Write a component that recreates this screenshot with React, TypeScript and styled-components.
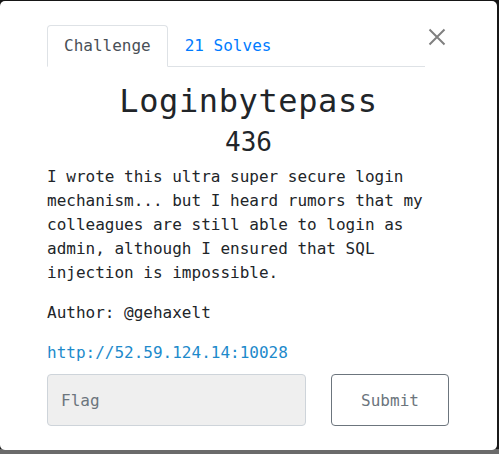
import React from "react";
import styled, { createGlobalStyle } from "styled-components";

const GlobalStyle = createGlobalStyle`
  html, body {
    margin: 0;
    padding: 0;
    background: #1b1b1b;
  }
  * {
    box-sizing: border-box;
  }
`;

const MONO = `"DejaVu Sans Mono", "Liberation Mono", monospace`;

const Backdrop = styled.div`
  width: 499px;
  height: 454px;
  overflow: hidden;
  padding-top: 1px;
  background: linear-gradient(to bottom, #161616 0, #1b1b1b 449px, #6b6b6b 449px, #6b6b6b 100%);
`;

const Modal = styled.div`
  width: 497px;
  height: 449px;
  background: #ffffff;
  border-radius: 5px;
  padding: 24px 47px 24px 47px;
  font-family: ${MONO};
  color: #212529;
  display: flex;
  flex-direction: column;
`;

const Header = styled.div`
  display: flex;
  align-items: flex-start;
`;

const Nav = styled.ul`
  flex: 0 0 378px;
  display: flex;
  list-style: none;
  margin: 0;
  padding: 0;
  border-bottom: 1px solid #dee2e6;
`;

const Tab = styled.li<{ active?: boolean }>`
  margin-bottom: -1px;
  padding: 8px 16px;
  font-size: 16px;
  line-height: 24px;
  border: 1px solid ${p => (p.active ? "#dee2e6" : "transparent")};
  border-bottom-color: ${p => (p.active ? "#ffffff" : "transparent")};
  border-radius: 4px 4px 0 0;
  color: ${p => (p.active ? "#495057" : "#007bff")};
  background: ${p => (p.active ? "#ffffff" : "transparent")};
  cursor: pointer;
`;

const Close = styled.button`
  margin: 3px 0 0 3px;
  width: 18px;
  height: 18px;
  padding: 0;
  border: none;
  background: transparent;
  cursor: pointer;
  display: flex;
`;

const Title = styled.h2`
  margin: 15px 0 0;
  font-size: 32px;
  line-height: 38px;
  font-weight: 400;
  letter-spacing: 0.6px;
  text-align: center;
`;

const Points = styled.h4`
  margin: 7px 0 0;
  font-size: 26px;
  line-height: 31px;
  font-weight: 400;
  text-align: center;
`;

const Description = styled.p`
  margin: 7px 0 16px;
  font-size: 16px;
  line-height: 24px;
`;

const Line = styled.p`
  margin: 0 0 16px;
  font-size: 16px;
  line-height: 24px;
`;

const Link = styled.a`
  color: #1d8acb;
  text-decoration: none;
`;

const Form = styled.form`
  margin-top: -7px;
  display: grid;
  grid-template-columns: 259px 118px;
  column-gap: 25px;
`;

const FlagInput = styled.input`
  height: 52px;
  padding: 0 13px;
  font-family: ${MONO};
  font-size: 16px;
  color: #495057;
  background: #efefef;
  border: 1px solid #ced4da;
  border-radius: 4px;
  outline: none;
  &::placeholder {
    color: #6c757d;
  }
`;

const SubmitButton = styled.button`
  height: 52px;
  font-family: ${MONO};
  font-size: 16px;
  color: #6c757d;
  background: #ffffff;
  border: 1px solid #6c757d;
  border-radius: 4px;
  cursor: pointer;
`;

const App = () => (
  <>
    <GlobalStyle />
    <Backdrop>
      <Modal>
        <Header>
          <Nav>
            <Tab active>Challenge</Tab>
            <Tab>21 Solves</Tab>
          </Nav>
          <Close aria-label="Close">
            <svg width="18" height="18" viewBox="0 0 18 18">
              <path d="M1.5 1.5 L16.5 16.5 M16.5 1.5 L1.5 16.5" stroke="#808080" strokeWidth="2" fill="none" />
            </svg>
          </Close>
        </Header>
        <Title>Loginbytepass</Title>
        <Points>436</Points>
        <Description>
          I wrote this ultra super secure login mechanism... but I heard rumors that my colleagues are still able to
          login as admin, although I ensured that SQL injection is impossible.
        </Description>
        <Line>Author: @gehaxelt</Line>
        <Line>
          <Link href="#">http://52.59.124.14:10028</Link>
        </Line>
        <Form onSubmit={e => e.preventDefault()}>
          <FlagInput placeholder="Flag" />
          <SubmitButton type="submit">Submit</SubmitButton>
        </Form>
      </Modal>
    </Backdrop>
  </>
);

export default App;
